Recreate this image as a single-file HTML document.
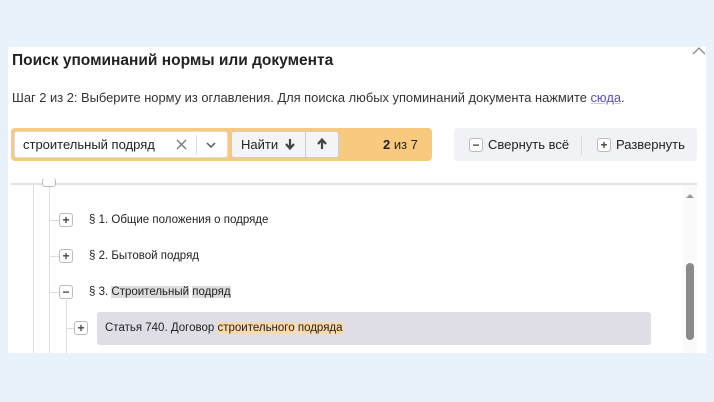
<!DOCTYPE html><html><head><meta charset="utf-8"><style>
*{box-sizing:border-box;margin:0;padding:0}
body{width:714px;height:402px;background:#e8f2fb;font-family:"Liberation Sans",sans-serif;color:#222;position:relative;overflow:hidden}
.a{position:absolute}
.panel{left:8px;top:47px;width:698px;height:306px;background:#fff}
.box{width:14px;height:14px;border:1px solid #bbb;border-radius:3px;background:#fff;font-size:12px;line-height:12px;text-align:center;font-weight:bold;color:#444}
.t{font-size:11.5px;white-space:nowrap}
</style></head><body>
<div class="a panel"></div>
<svg class="a" style="left:690px;top:44px" width="18" height="12"><path d="M3 10 L9 4 L15 10" fill="none" stroke="#888" stroke-width="1.3"/></svg>
<div class="a" style="left:12px;top:52px;font-size:15.5px;font-weight:bold;color:#222">Поиск упоминаний нормы или документа</div>
<div class="a" style="left:12px;top:90px;font-size:12.9px;color:#333">Шаг 2 из 2: Выберите норму из оглавления. Для поиска любых упоминаний документа нажмите <span style="color:#5a4ec0;text-decoration:underline;text-decoration-color:#ccc">сюда</span>.</div>
<div class="a" style="left:11px;top:128px;width:421px;height:33px;background:#f9c97e;border-radius:4px"></div>
<div class="a" style="left:14px;top:131px;width:214px;height:27px;background:#fff;border:1px solid #ddd;border-radius:3px"></div>
<div class="a" style="left:23px;top:137px;font-size:13px;color:#222">строительный подряд</div>
<svg class="a" style="left:176px;top:139px" width="11" height="11"><path d="M1 1 L10 10 M10 1 L1 10" stroke="#777" stroke-width="1.3"/></svg>
<div class="a" style="left:196px;top:135px;width:1px;height:19px;background:#ddd"></div>
<svg class="a" style="left:206px;top:141px" width="10" height="8"><path d="M1 2 L5 6 L9 2" fill="none" stroke="#555" stroke-width="1.5"/></svg>
<div class="a" style="left:231px;top:131px;width:108px;height:27px;background:#f4f4f4;border:1px solid #ccc;border-radius:3px"></div>
<div class="a" style="left:305px;top:132px;width:1px;height:25px;background:#ccc"></div>
<div class="a" style="left:241px;top:137px;font-size:13px;color:#222">Найти</div>
<svg class="a" style="left:284px;top:138px" width="12" height="12"><path d="M6 1 V10 M2 6 L6 10.5 L10 6" fill="none" stroke="#444" stroke-width="2.2"/></svg>
<svg class="a" style="left:316px;top:138px" width="12" height="12"><path d="M6 11 V2 M2 6 L6 1.5 L10 6" fill="none" stroke="#444" stroke-width="2.2"/></svg>
<div class="a" style="left:383px;top:137px;font-size:13px;color:#222"><b>2</b> из 7</div>
<div class="a" style="left:454px;top:128px;width:243px;height:33px;background:#f1f2f5;border-radius:3px"></div>
<div class="a box" style="left:469px;top:138px">−</div>
<div class="a" style="left:488px;top:137px;font-size:13px;color:#222">Свернуть всё</div>
<div class="a" style="left:581px;top:135px;width:1px;height:20px;background:#ddd"></div>
<div class="a box" style="left:597px;top:138px">+</div>
<div class="a" style="left:616px;top:137px;font-size:13px;color:#222">Развернуть</div>
<div class="a" style="left:11px;top:183px;width:686px;height:2px;background:#e2e2e2"></div>
<div class="a" style="left:683px;top:185px;width:14px;height:168px;background:#fafafa"></div>
<svg class="a" style="left:685px;top:192px" width="10" height="8"><path d="M1 6 L5 2 L9 6Z" fill="#999"/></svg>
<div class="a" style="left:686px;top:263px;width:8px;height:77px;background:#8a8a8a;border-radius:4px"></div>
<div class="a" style="left:33px;top:185px;width:1px;height:168px;background:#ddd"></div>
<div class="a" style="left:49px;top:185px;width:1px;height:168px;background:#ddd"></div>
<div class="a" style="left:66px;top:300px;width:1px;height:53px;background:#ddd"></div>
<div class="a" style="left:49px;top:220px;width:10px;height:1px;background:#ddd"></div>
<div class="a" style="left:49px;top:256px;width:10px;height:1px;background:#ddd"></div>
<div class="a" style="left:49px;top:292px;width:10px;height:1px;background:#ddd"></div>
<div class="a" style="left:66px;top:328px;width:8px;height:1px;background:#ddd"></div>
<div class="a box" style="left:42px;top:178px;height:9px;border-top:none"></div>
<div class="a box" style="left:59px;top:213px">+</div>
<div class="a t" style="left:89px;top:214px">§ 1. Общие положения о подряде</div>
<div class="a box" style="left:59px;top:249px">+</div>
<div class="a t" style="left:89px;top:250px">§ 2. Бытовой подряд</div>
<div class="a box" style="left:59px;top:285px">−</div>
<div class="a t" style="left:89px;top:286px">§ 3. <span style="background:#ddd">Строительный</span> <span style="background:#ddd">подряд</span></div>
<div class="a" style="left:97px;top:312px;width:554px;height:33px;background:#dfdde6;border-radius:3px"></div>
<div class="a box" style="left:74px;top:321px">+</div>
<div class="a t" style="left:105px;top:322px">Статья 740. Договор <span style="background:#fcd9a8">строительного</span> <span style="background:#fcd9a8">подряда</span></div>
</body></html>
